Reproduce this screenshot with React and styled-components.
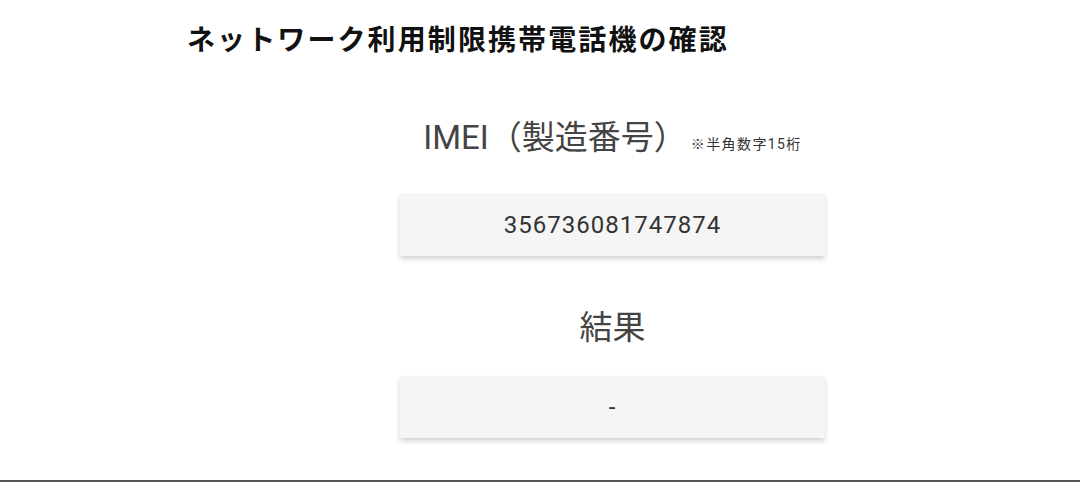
import React from "react";
import styled, { createGlobalStyle } from "styled-components";

const GlobalStyle = createGlobalStyle`
  html, body {
    margin: 0;
    padding: 0;
    background: #ffffff;
    font-family: Roboto, "Noto Sans CJK JP", "Noto Sans", sans-serif;
  }
`;

const Page = styled.div`
  width: 1080px;
  height: 482px;
  box-sizing: border-box;
  border-bottom: 2px solid #555555;
  overflow: hidden;
  display: flex;
  flex-direction: column;
  padding: 18px 42px 0 187px;
`;

const Title = styled.h1`
  margin: 0;
  font-family: "Noto Sans CJK JP", sans-serif;
  font-size: 28px;
  line-height: 40px;
  font-weight: 700;
  color: #111111;
  letter-spacing: 2.1px;
`;

const Form = styled.div`
  display: flex;
  flex-direction: column;
  align-items: center;
  margin-top: 58px;
`;

const Label = styled.div`
  display: flex;
  align-items: baseline;
  font-size: 33px;
  line-height: 44px;
  color: #444444;
  font-weight: 400;
  margin-top: ${(p) => p.$top || 0}px;
`;

const Note = styled.span`
  font-size: 14px;
  letter-spacing: 1.4px;
  color: #333333;
  margin-left: 4px;
`;

const Field = styled.div`
  width: 425px;
  height: 62px;
  margin-top: ${(p) => p.$top}px;
  background: #f5f5f5;
  box-shadow: 0 3px 5px rgba(0, 0, 0, 0.18);
  display: flex;
  align-items: center;
  justify-content: center;
  font-size: 24px;
  color: #333333;
  letter-spacing: 1px;
`;

export default function App() {
  return (
    <>
      <GlobalStyle />
      <Page>
        <Title>ネットワーク利用制限携帯電話機の確認</Title>
        <Form>
          <Label>
            IMEI（製造番号）<Note>※半角数字15桁</Note>
          </Label>
          <Field $top={28}>356736081747874</Field>
          <Label $top={50}>結果</Label>
          <Field $top={26}>-</Field>
        </Form>
      </Page>
    </>
  );
}
